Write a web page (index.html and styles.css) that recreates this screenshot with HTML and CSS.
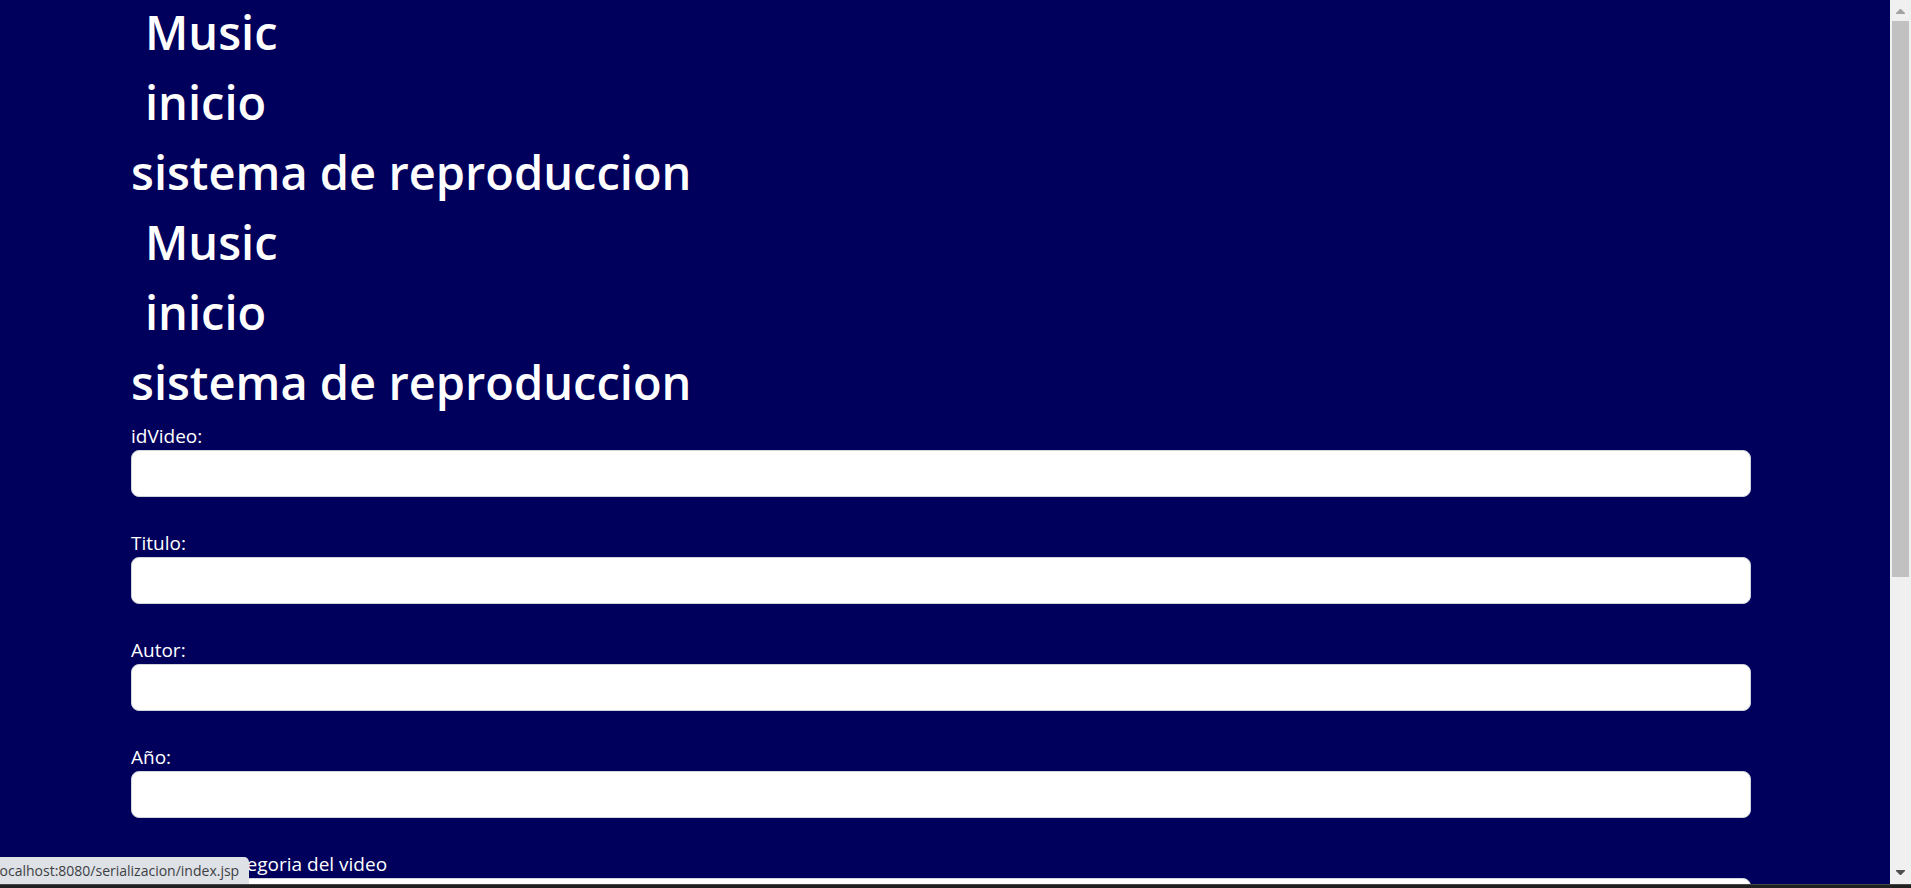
FILE: index.html
```html
<!DOCTYPE html>
<html lang="es">
<head>
<meta charset="utf-8">
<title>Music</title>
<link rel="stylesheet" href="styles.css">
</head>
<body>
<div class="window">
  <div class="viewport">
    <main class="page">
      <header class="headings">
        <h1 class="title"><a class="nav-link" href="#">Music</a></h1>
        <h1 class="title"><a class="nav-link" href="#">inicio</a></h1>
        <h1 class="title">sistema de reproduccion</h1>
        <h1 class="title"><a class="nav-link" href="#">Music</a></h1>
        <h1 class="title"><a class="nav-link" href="#">inicio</a></h1>
        <h1 class="title">sistema de reproduccion</h1>
      </header>
      <form class="form">
        <div class="field"><label class="label" for="idVideo">idVideo:</label><input class="control" id="idVideo" type="text"></div>
        <div class="field"><label class="label" for="titulo">Titulo:</label><input class="control" id="titulo" type="text"></div>
        <div class="field"><label class="label" for="autor">Autor:</label><input class="control" id="autor" type="text"></div>
        <div class="field"><label class="label" for="anio">Año:</label><input class="control" id="anio" type="text"></div>
        <div class="field"><label class="label" for="categoria">Selecione categoria del video</label><select class="control" id="categoria"><option></option></select></div>
      </form>
    </main>
    <div class="scrollbar">
      <svg class="arrow" viewBox="0 0 21 21"><path d="M6 14h9v-1l-4-4h-1l-4 4z" fill="#a3a3a3"/></svg>
      <div class="track"><div class="thumb"></div></div>
      <svg class="arrow" viewBox="0 0 21 21"><path d="M6 7h9v1l-4 4h-1l-4-4z" fill="#505050"/></svg>
    </div>
    <div class="status">localhost:8080/serializacion/index.jsp</div>
  </div>
  <div class="taskbar"></div>
</div>
</body>
</html>
```
FILE: styles.css
```css
* { box-sizing: border-box; }
body { margin: 0; font-family: "Segoe UI", "Open Sans", "Noto Sans", sans-serif; font-size: 19px; color: #fff; background: #00005c; }
.window { display: flex; flex-direction: column; height: 100vh; }
.viewport { position: relative; display: flex; flex: 1; min-height: 0; overflow: hidden; }
.page { flex: 1; padding: 0 139px 0 131px; overflow: hidden; }
.title { margin: 0 0 6px; font-size: 47px; font-weight: 600; line-height: 64px; }
.nav-link { padding-left: 14px; color: inherit; text-decoration: none; }
.form { padding-top: 2px; }
.field { display: flex; flex-direction: column; margin-bottom: 32px; }
.label { line-height: 28px; }
.control { appearance: none; width: 100%; height: 47px; padding: 8px 12px; border: 1px solid #ced4da; border-radius: 8px; background: #fff; color: #212529; font: inherit; }
.scrollbar { display: flex; flex-direction: column; width: 21px; background: #f0f0f0; }
.arrow { display: block; width: 21px; height: 21px; }
.track { flex: 1; padding: 0 2px; }
.thumb { height: 66%; background: #c1c1c1; }
.status { position: absolute; left: -4px; bottom: 0; padding: 3px 10px 3px 0; border-radius: 0 5px 0 0; background: #dee1e6; color: #3c4043; font-size: 14px; line-height: 21px; }
.taskbar { height: 4px; border-top: 1px solid #454545; background: #202020; }
```
